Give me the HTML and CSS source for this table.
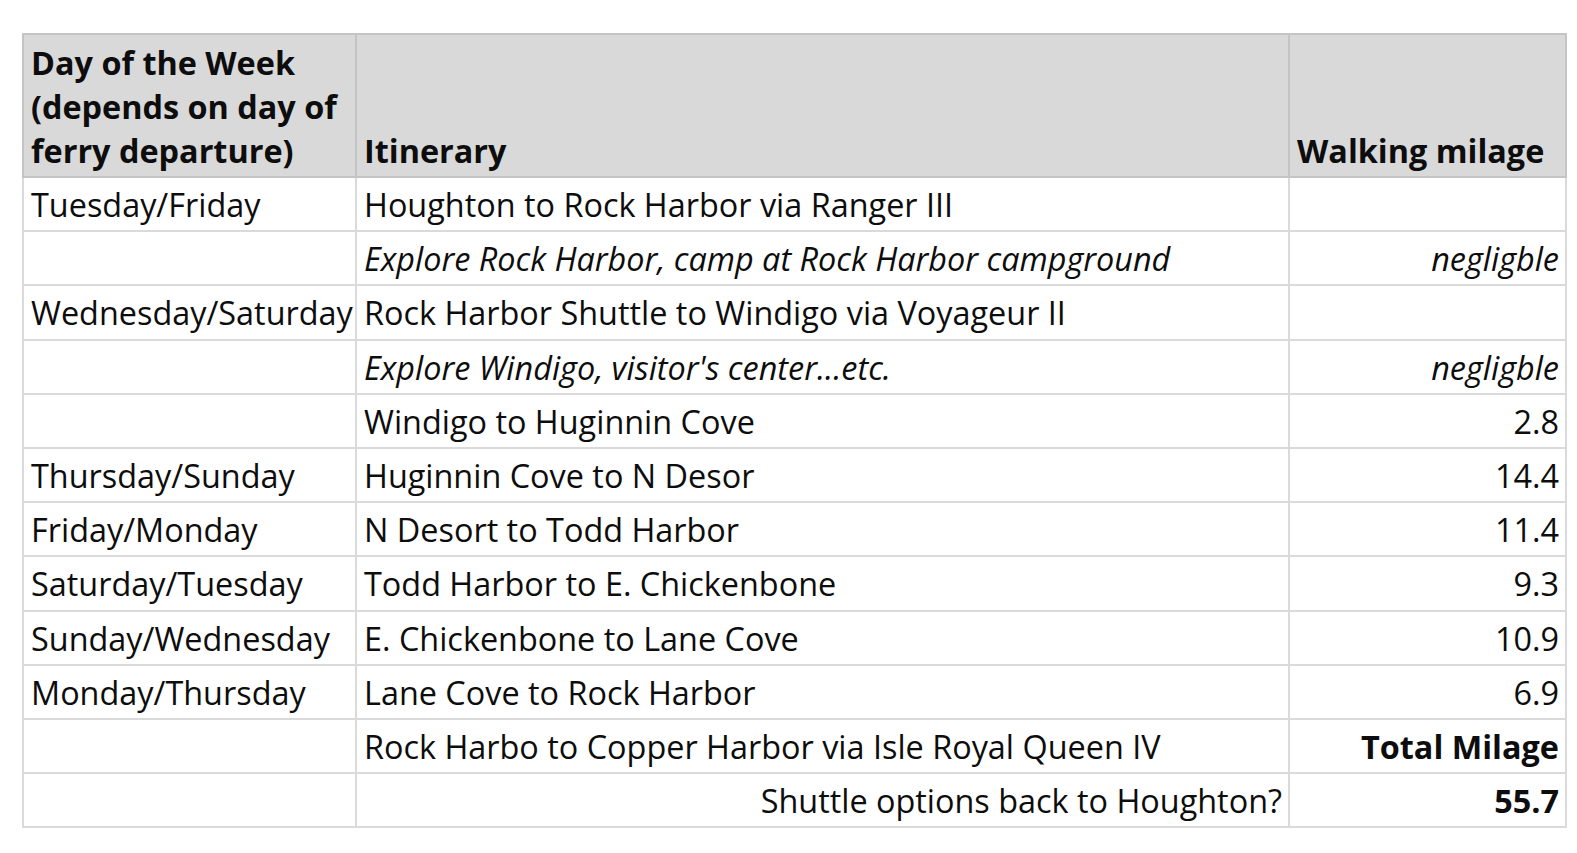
FILE: index.html
```html
<!DOCTYPE html>
<html>
<head>
<meta charset="utf-8">
<link rel="stylesheet" href="styles.css">
</head>
<body>
<table class="plan">
  <colgroup>
    <col class="c-day">
    <col class="c-itin">
    <col class="c-miles">
  </colgroup>
  <thead>
    <tr>
      <th>Day of the Week (depends on day of ferry departure)</th>
      <th>Itinerary</th>
      <th>Walking milage</th>
    </tr>
  </thead>
  <tbody>
    <tr><td>Tuesday/Friday</td><td>Houghton to Rock Harbor via Ranger III</td><td class="num"></td></tr>
    <tr><td></td><td class="it">Explore Rock Harbor, camp at Rock Harbor campground</td><td class="num it">negligble</td></tr>
    <tr><td>Wednesday/Saturday</td><td>Rock Harbor Shuttle to Windigo via Voyageur II</td><td class="num"></td></tr>
    <tr><td></td><td class="it">Explore Windigo, visitor's center...etc.</td><td class="num it">negligble</td></tr>
    <tr><td></td><td>Windigo to Huginnin Cove</td><td class="num">2.8</td></tr>
    <tr><td>Thursday/Sunday</td><td>Huginnin Cove to N Desor</td><td class="num">14.4</td></tr>
    <tr><td>Friday/Monday</td><td>N Desort to Todd Harbor</td><td class="num">11.4</td></tr>
    <tr><td>Saturday/Tuesday</td><td>Todd Harbor to E. Chickenbone</td><td class="num">9.3</td></tr>
    <tr><td>Sunday/Wednesday</td><td>E. Chickenbone to Lane Cove</td><td class="num">10.9</td></tr>
    <tr><td>Monday/Thursday</td><td>Lane Cove to Rock Harbor</td><td class="num">6.9</td></tr>
    <tr><td></td><td>Rock Harbo to Copper Harbor via Isle Royal Queen IV</td><td class="num b">Total Milage</td></tr>
    <tr><td></td><td class="num">Shuttle options back to Houghton?</td><td class="num b">55.7</td></tr>
  </tbody>
</table>
</body>
</html>
```
FILE: styles.css
```css
html, body {
  margin: 0;
  padding: 0;
  background: #ffffff;
}

body {
  font-family: "Open Sans", "Noto Sans", sans-serif;
  color: #0d0d0d;
}

.plan {
  margin: 33px 0 0 22px;
  width: 1543px;
  border-collapse: collapse;
  table-layout: fixed;
  font-size: 32.4px;
}

.c-day { width: 333px; }
.c-itin { width: 933px; }
.c-miles { width: 277px; }

.plan th,
.plan td {
  border: 2px solid #dadada;
  padding: 4px 6px 4px 7px;
  line-height: 44px;
  height: 44.2px;
  text-align: left;
  white-space: nowrap;
  overflow: visible;
}

.plan th {
  background: #d9d9d9;
  border-color: #c4c4c4;
  font-weight: 700;
  vertical-align: bottom;
  white-space: normal;
  height: auto;
  padding-top: 5px;
  padding-bottom: 4px;
}

.plan td.num { text-align: right; }
.plan td.it { font-style: italic; }
.plan td.b { font-weight: 700; }
```
